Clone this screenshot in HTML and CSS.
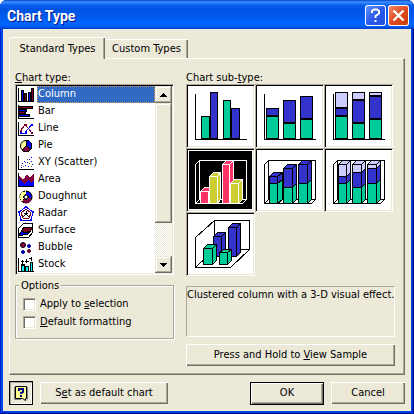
FILE: index.html
```html
<!DOCTYPE html>
<html lang="en">
<head>
<meta charset="utf-8">
<title>Chart Type</title>
<link rel="stylesheet" href="styles.css">
</head>
<body>
<main class="window">
  <header class="titlebar">
    <h1>Chart Type</h1>
    <button class="cap help" aria-label="Help"><svg width="21" height="21" viewBox="0 0 21 21"><path d="M7 8V6L9 4.500H12L14 6V8.500L10.500 11V13M10.500 15V17" fill="none" stroke="#fff" stroke-width="2"/></svg></button>
    <button class="cap close" aria-label="Close"><svg width="21" height="21" viewBox="0 0 21 21"><path d="M5.500 5.500L15.500 15.500M15.500 5.500L5.500 15.500" stroke="#fff" stroke-width="2.400"/></svg></button>
  </header>
  <div class="client">
    <div class="tabs" role="tablist">
      <button class="tab active" role="tab" aria-selected="true">Standard Types</button>
      <button class="tab" role="tab" aria-selected="false">Custom Types</button>
    </div>
    <section class="page">
      <div class="left">
        <div class="label" id="types"><u>C</u>hart type:</div>
        <div class="listbox">
          <ul role="listbox" aria-labelledby="types">
            <li role="option" aria-selected="true" class="selected"><svg viewBox="0 0 20 17"><path d="M1 2h1v13h15v1H1z"/><path d="M4 4h3v11H4zM7 7h3v8H7zM11 6h3v9h-3zM14 2h3v13h-3z"/><path fill="#00f" d="M5 5h1v10H5zM12 7h1v8h-1z"/><path fill="#800020" d="M8 8h1v7H8zM15 3h1v12h-1z"/></svg><span>Column</span></li>
            <li role="option"><svg viewBox="0 0 20 17"><path d="M1 2h1v13h15v1H1zM2 3h14v3H2zM2 6h8v3H2zM2 9h7v2H2zM2 11h11v3H2z"/><path fill="#800020" d="M2 4h13v1H2zM2 9h5v1H2z"/><path fill="#00f" d="M2 7h7v1H2zM2 12h10v1H2z"/></svg><span>Bar</span></li>
            <li role="option"><svg viewBox="0 0 20 17"><path d="M1 2h1v13h15v1H1z"/><path d="M3 11L8 5L11 8L15 13" fill="none" stroke="#800020"/><path d="M3 13H8L11 9L15 4" fill="none" stroke="#00f"/><path fill="#800020" d="M7 4h3v2H7zM3 10h2v2H3zM14 12h2v2h-2z"/><path fill="#00f" d="M3 12h2v2H3zM8 12h2v2H8zM14 4h2v2h-2z"/></svg><span>Line</span></li>
            <li role="option"><svg viewBox="0 0 20 17"><circle cx="9" cy="9" r="5.500" fill="#ff9" stroke="#000"/><path fill="#00f" stroke="#000" d="M9 9V3.500A5.500 5.500 0 0 1 14 12z"/><path fill="#800040" stroke="#000" d="M9 9L14 12A5.500 5.500 0 0 1 5 13z"/></svg><span>Pie</span></li>
            <li role="option"><svg viewBox="0 0 20 17"><path d="M1 2h1v13h15v1H1z"/><path fill="#00f" d="M4 13h1v1H4zM5 9h1v1H5zM7 7h1v1H7zM8 11h1v1H8zM10 8h1v1h-1zM12 5h1v1h-1zM14 3h1v1h-1zM14 7h1v1h-1zM15 10h1v1h-1zM11 12h1v1h-1z"/><path fill="#666" d="M4 11h1v1H4zM6 12h1v1H6zM8 8h1v1H8zM10 5h1v1h-1zM12 9h1v1h-1zM14 12h1v1h-1z"/></svg><span>XY (Scatter)</span></li>
            <li role="option"><svg viewBox="0 0 20 17"><path fill="#800040" d="M2 5L6 9L10 3L13 7L17 2V14H2z"/><path fill="#00f" d="M2 8L7 13L11 9L14 12L17 9V15H2z"/><path d="M1 2h1v13h15v1H1z"/></svg><span>Area</span></li>
            <li role="option"><svg viewBox="0 0 20 17"><circle cx="9" cy="9" r="4" fill="none" stroke="#000" stroke-width="5"/><path d="M9 5A4 4 0 0 1 13 10" fill="none" stroke="#00f" stroke-width="3"/><path d="M13 10A4 4 0 0 1 6 12" fill="none" stroke="#800040" stroke-width="3"/><path d="M6 12A4 4 0 0 1 9 5" fill="none" stroke="#ff9" stroke-width="3"/></svg><span>Doughnut</span></li>
            <li role="option"><svg viewBox="0 0 20 17"><path fill="none" stroke="#00f" d="M9 2L16 7L14 15H4L2 7z"/><path fill="none" stroke="#800020" d="M9 4L14 8L12 13H6L4 8z"/><path fill="none" stroke="#000" d="M9 6V9L6 12M9 9L12 12M7 8H11"/><path fill="#00f" d="M8 1h2v2H8zM1 6h2v2H1zM15 6h2v2h-2zM3 14h2v2H3zM13 14h2v2h-2z"/></svg><span>Radar</span></li>
            <li role="option"><svg viewBox="0 0 20 17"><path d="M1.500 6.500L6.500 1.500H15.500V10.500L11.500 15.500H1.500z" fill="#fff" stroke="#000"/><path stroke="#000" fill="#800020" d="M4 10L7 5H15V7L12 11z"/><path stroke="#000" fill="#00f" d="M2 13L5 9L8 11L13 9L11 12L6 13z"/></svg><span>Surface</span></li>
            <li role="option"><svg viewBox="0 0 20 17"><circle cx="6" cy="6" r="2.500" fill="#800040" stroke="#000"/><circle cx="12" cy="7" r="1.500" fill="#00f" stroke="#000080"/><circle cx="6" cy="13" r="1.500" fill="#00f" stroke="#000080"/><circle cx="12" cy="12" r="1.500" fill="#800040" stroke="#400020"/></svg><span>Bubble</span></li>
            <li role="option"><svg viewBox="0 0 20 17"><path d="M1 2h1v13h15v1H1zM4 8h4v7H4zM8 10h4v5H8zM13 6h3v9h-3zM5 4h1v5H5zM4 5h3v1H4zM9 3h1v4H9zM8 5h4v1H8zM14 1h1v4h-1zM12 2h3v1h-3z"/><path fill="#0ff" d="M5 10h2v5H5zM9 11h2v4H9zM14 7h1v8h-1z"/></svg><span>Stock</span></li>
          </ul>
          <div class="scroll">
            <button aria-label="Scroll up"><svg width="7" height="4" viewBox="0 0 7 4"><path d="M3 0h1v1h1v1h1v1h1v1H0V3h1V2h1V1h1z"/></svg></button>
            <div class="thumb"></div>
            <div class="track"></div>
            <button aria-label="Scroll down"><svg width="7" height="4" viewBox="0 0 7 4"><path d="M0 0h7v1H6v1H5v1H4v1H3V3H2V2H1V1H0z"/></svg></button>
          </div>
        </div>
        <fieldset class="options">
          <legend>Options</legend>
          <label><input type="checkbox"><span>Apply to <u>s</u>election</span></label>
          <label><input type="checkbox"><span><u>D</u>efault formatting</span></label>
        </fieldset>
      </div>
      <div class="right">
        <div class="label">Chart sub-<u>t</u>ype:</div>
        <div class="gallery">
          <button class="cell" aria-label="Clustered column"><svg viewBox="0 0 69 64"><g class="flat"><rect class="g" x="15" y="32" width="8" height="22"/><rect class="b" x="24" y="8" width="7" height="46"/><rect class="g" x="37" y="16" width="7" height="38"/><rect class="b" x="45" y="24" width="8" height="30"/><path d="M9 9V55H60"/></g></svg></button>
          <button class="cell" aria-label="Stacked column"><svg viewBox="0 0 69 64"><g class="flat"><rect class="b" x="11" y="24" width="12" height="7"/><rect class="g" x="11" y="32" width="12" height="22"/><rect class="b" x="28" y="16" width="12" height="22"/><rect class="g" x="28" y="39" width="12" height="15"/><rect class="b" x="45" y="12" width="12" height="22"/><rect class="g" x="45" y="35" width="12" height="19"/><path d="M9 9V55H60"/></g></svg></button>
          <button class="cell" aria-label="100% stacked column"><svg viewBox="0 0 69 64"><g class="flat"><rect class="l" x="11" y="8" width="12" height="15"/><rect class="b" x="11" y="24" width="12" height="7"/><rect class="g" x="11" y="32" width="12" height="22"/><rect class="l" x="28" y="8" width="12" height="7"/><rect class="b" x="28" y="16" width="12" height="22"/><rect class="g" x="28" y="39" width="12" height="15"/><rect class="l" x="45" y="8" width="12" height="3"/><rect class="b" x="45" y="12" width="12" height="22"/><rect class="g" x="45" y="35" width="12" height="19"/><path d="M9 9V55H60"/></g></svg></button>
          <button class="cell chosen" aria-label="Clustered column 3-D"><svg viewBox="0 0 69 64"><g class="flat inv"><path d="M2 2H66V61H2z"/><path d="M13 51V12H60V51H13L9 55V16L13 12M9 55H56L60 51"/><path class="p" d="M14 55V43L18 39H26V51L22 55zM14 43H22V55M22 43L26 39"/><path class="y" d="M23 55V28L27 24H34V51L31 55zM23 28H31V55M31 28L34 24"/><path class="p" d="M36 55V16L40 12H47V51L43 55zM36 16H43V55M43 16L47 12"/><path class="y" d="M44 55V35L48 31H56V51L52 55zM44 35H52V55M52 35L56 31"/></g></svg></button>
          <button class="cell" aria-label="Stacked column 3-D"><svg viewBox="0 0 69 64"><g class="flat"><path d="M13 51V12H60V51H13L9 55V16L13 12M9 55H56L60 51"/><path class="b" d="M14 35V28L18 24H27V31L22 35zM14 28H22V35M22 28L27 24"/><path class="g" d="M14 35H22L27 31V51L22 55H14zM22 35V55"/><path class="b" d="M28 39V20L32 16H41V35L37 39zM28 20H37V39M37 20L41 16"/><path class="g" d="M28 39H37L41 35V51L37 55H28zM37 39V55"/><path class="b" d="M43 35V16L47 12H56V31L52 35zM43 16H52V35M52 16L56 12"/><path class="g" d="M43 35H52L56 31V51L52 55H43zM52 35V55"/></g></svg></button>
          <button class="cell" aria-label="100% stacked column 3-D"><svg viewBox="0 0 69 64"><g class="flat"><path d="M13 51V12H60V51H13L9 55V16L13 12M9 55H56L60 51"/><path class="l" d="M14 28V16L18 12H26V24L22 28zM14 16H22V28M22 16L26 12"/><path class="b" d="M14 28H22L26 24V31L22 35H14zM22 28V35"/><path class="g" d="M14 35H22L26 31V51L22 55H14zM22 35V55"/><path class="l" d="M28 24V16L32 12H41V20L37 24zM28 16H37V24M37 16L41 12"/><path class="b" d="M28 24H37L41 20V35L37 39H28zM37 24V39"/><path class="g" d="M28 39H37L41 35V51L37 55H28zM37 39V55"/><path class="l" d="M43 20V16L47 12H56V16L52 20zM43 16H52V20M52 16L56 12"/><path class="b" d="M43 20H52L56 16V31L52 35H43zM52 20V35"/><path class="g" d="M43 35H52L56 31V51L52 55H43zM52 35V55"/></g></svg></button>
          <button class="cell" aria-label="3-D column"><svg viewBox="0 0 69 64"><g class="flat"><path d="M28 37V8H63V37H28L9 55V25L28 8M9 55H44L63 37"/><path class="b" d="M27 44V24L31 20H39V40L35 44zM27 24H35V44M35 24L39 20"/><path class="b" d="M42 44V15L46 11H54V40L50 44zM42 15H50V44M50 15L54 11"/><path class="g" d="M17 52V36L21 32H30V48L26 52zM17 36H26V52M26 36L30 32"/><path class="g" d="M33 52V40L37 37H45V48L41 52zM33 40H41V52M41 40L45 37"/></g></svg></button>
        </div>
        <p class="description">Clustered column with a 3-D visual effect.</p>
        <button class="btn sample">Press and Hold to <u>V</u>iew Sample</button>
      </div>
    </section>
    <footer>
      <button class="assistant" aria-label="Office Assistant"><svg width="16" height="17" viewBox="0 0 16 17"><path d="M2.500 1.500H13.500V13.500H12.500V15.500L9.500 13.500H2.500z" fill="#ffff99" stroke="#000"/><path d="M1.500 2V14.500H8M14.500 2V14.500" fill="none" stroke="#808080"/><path d="M6 6V4H10V7L8 8V9M8 10V12" fill="none" stroke="#000080" stroke-width="2"/></svg></button>
      <button class="btn default">S<u>e</u>t as default chart</button>
      <button class="btn ok">OK</button>
      <button class="btn cancel">Cancel</button>
    </footer>
  </div>
</main>
</body>
</html>
```
FILE: styles.css
```css
* { box-sizing: border-box; }
body {
  margin: 0;
  background: #fff;
  font: 11px/14px "DejaVu Sans Condensed", "Noto Sans", sans-serif;
  color: #000;
}
button {
  font: inherit;
  color: inherit;
  padding: 0;
  border: 0;
  background: none;
}
svg { display: block; }
.window {
  display: flex;
  flex-direction: column;
  min-height: 100vh;
  padding: 0 3px 3px;
  border-radius: 7px 7px 0 0;
  overflow: hidden;
  background: #0048f0;
  box-shadow: inset 1px 0 #0020c8, inset -1px 0 #00138c, inset -2px 0 #0024bc, inset 0 -1px #00138c, inset 0 -2px #0030d0;
}
.titlebar {
  display: flex;
  align-items: center;
  gap: 2px;
  height: 29px;
  margin: 0 -3px;
  padding: 2px 5px 0 7px;
  background: linear-gradient(#0844c8 0, #3c90ff 2px, #0860f0 5px, #0054e3 9px, #0058ec 16px, #0066ff 24px, #0060fc 26px, #003cc8 29px);
}
.titlebar h1 {
  flex: 1;
  margin: 0;
  font: bold 14px/18px Roboto, "Open Sans", sans-serif;
  color: #fff;
  text-shadow: 1px 1px #0a1883;
}
.cap {
  width: 21px;
  height: 21px;
  border-radius: 3px;
  box-shadow: inset 0 0 0 1px #fff;
}
.help { background: linear-gradient(135deg, #6a96fa, #2a5ae8 50%, #1c4cd8); }
.close { background: linear-gradient(135deg, #f09070, #e04c20 50%, #c83808); }
.client {
  flex: 1;
  padding: 8px 6px 6px;
  background: #ece9d8;
}
.tabs {
  display: flex;
  align-items: flex-end;
  height: 21px;
}
.tab {
  height: 19px;
  width: 83px;
  border: solid #fff;
  border-width: 1px 0 0;
  box-shadow: inset -1px 0 #716f64, inset -2px 0 #aca899;
}
.tab.active {
  position: relative;
  height: 22px;
  width: 96px;
  margin-bottom: -1px;
  border-left-width: 1px;
  border-radius: 2px 0 0 0;
  background: #ece9d8;
}
.page {
  display: flex;
  gap: 12px;
  padding: 12px 9px 8px 5px;
  border: 1px solid;
  border-color: #fff #716f64 #716f64 #fff;
  box-shadow: inset -1px -1px #aca899;
}
.left { flex: 0 0 159px; }
.right { flex: 1; min-width: 0; }
.label {
  height: 14px;
  margin-bottom: -1px;
}
.listbox {
  display: flex;
  border: 1px solid;
  border-color: #aca899 #fff #fff #aca899;
  background: #fff;
  box-shadow: inset 1px 1px #000, inset -1px -1px #ece9d8;
  padding: 1px;
}
.listbox ul {
  flex: 1;
  margin: 0;
  padding: 0;
  list-style: none;
}
.listbox li {
  display: flex;
  height: 17px;
}
.listbox li svg {
  width: 20px;
  height: 17px;
}
.listbox li path { shape-rendering: crispEdges; }
.listbox li span {
  flex: 1;
  padding-left: 1px;
  line-height: 15px;
}
.selected span {
  background: #316ac5;
  color: #fff;
  outline: 1px dotted #e0a050;
  outline-offset: -1px;
}
.scroll {
  display: flex;
  flex-direction: column;
  width: 17px;
}
.scroll button, .thumb {
  display: grid;
  place-items: center;
  height: 17px;
  background: #ece9d8;
  box-shadow: inset -1px -1px #716f64, inset 1px 1px #ece9d8, inset -2px -2px #aca899, inset 2px 2px #fff;
}
.thumb { height: 120px; }
.track {
  flex: 1;
  background: repeating-conic-gradient(#fff 0 25%, #ece9d8 0 50%) 0 0 / 2px 2px;
}
.options {
  position: relative;
  height: 54px;
  margin: 10px 0 0;
  padding: 0 0 0 7px;
  border: 1px solid #aca899;
  box-shadow: 1px 1px #fff, inset 1px 1px #fff;
}
.options legend {
  position: absolute;
  top: -7px;
  left: 3px;
  padding: 0 2px;
  background: #ece9d8;
}
.options label {
  display: flex;
  align-items: center;
  gap: 4px;
  height: 18px;
}
.options legend + label { margin-top: 9px; }
.options input {
  appearance: none;
  width: 13px;
  height: 13px;
  margin: 0;
  background: #fff;
  border: 1px solid;
  border-color: #aca899 #fff #fff #aca899;
  box-shadow: inset 1px 1px #716f64, inset -1px -1px #ece9d8;
}
.gallery {
  display: grid;
  grid-template-columns: repeat(3, 69px);
  grid-auto-rows: 64px;
}
.cell {
  background: #fff;
  box-shadow: inset 1px 1px #aca899, inset -1px -1px #fff, inset 2px 2px #000, inset -2px -2px #ece9d8;
}
.cell.chosen { background: #000; }
.cell svg {
  width: 69px;
  height: 64px;
}
.flat {
  transform: translate(0.5px, 0.5px);
  fill: none;
  stroke: #000;
  shape-rendering: crispEdges;
}
.inv { stroke: #fff; }
.g { fill: #00cc99; }
.b { fill: #3333cc; }
.l { fill: #ccccff; }
.p { fill: #ff3366; }
.y { fill: #cccc33; }
.description {
  height: 51px;
  margin: 10px 0 7px;
  padding-top: 1px;
  border: 1px solid;
  border-color: #aca899 #fff #fff #aca899;
  white-space: nowrap;
}
.btn {
  height: 22px;
  background: #ece9d8;
  box-shadow: inset 1px 1px #fff, inset -1px -1px #716f64, inset -2px -2px #aca899;
}
.sample { width: 100%; }
footer {
  display: flex;
  align-items: center;
  gap: 7px;
  margin-top: 6px;
}
.assistant {
  display: grid;
  place-items: center;
  width: 24px;
  height: 24px;
  border: 1px solid #000;
  box-shadow: inset 1px 1px #aca899, inset -1px -1px #fff;
}
.default { width: 128px; }
.ok {
  width: 74px;
  height: 23px;
  margin-left: auto;
  border: 1px solid #000;
}
.cancel { width: 74px; }
```
